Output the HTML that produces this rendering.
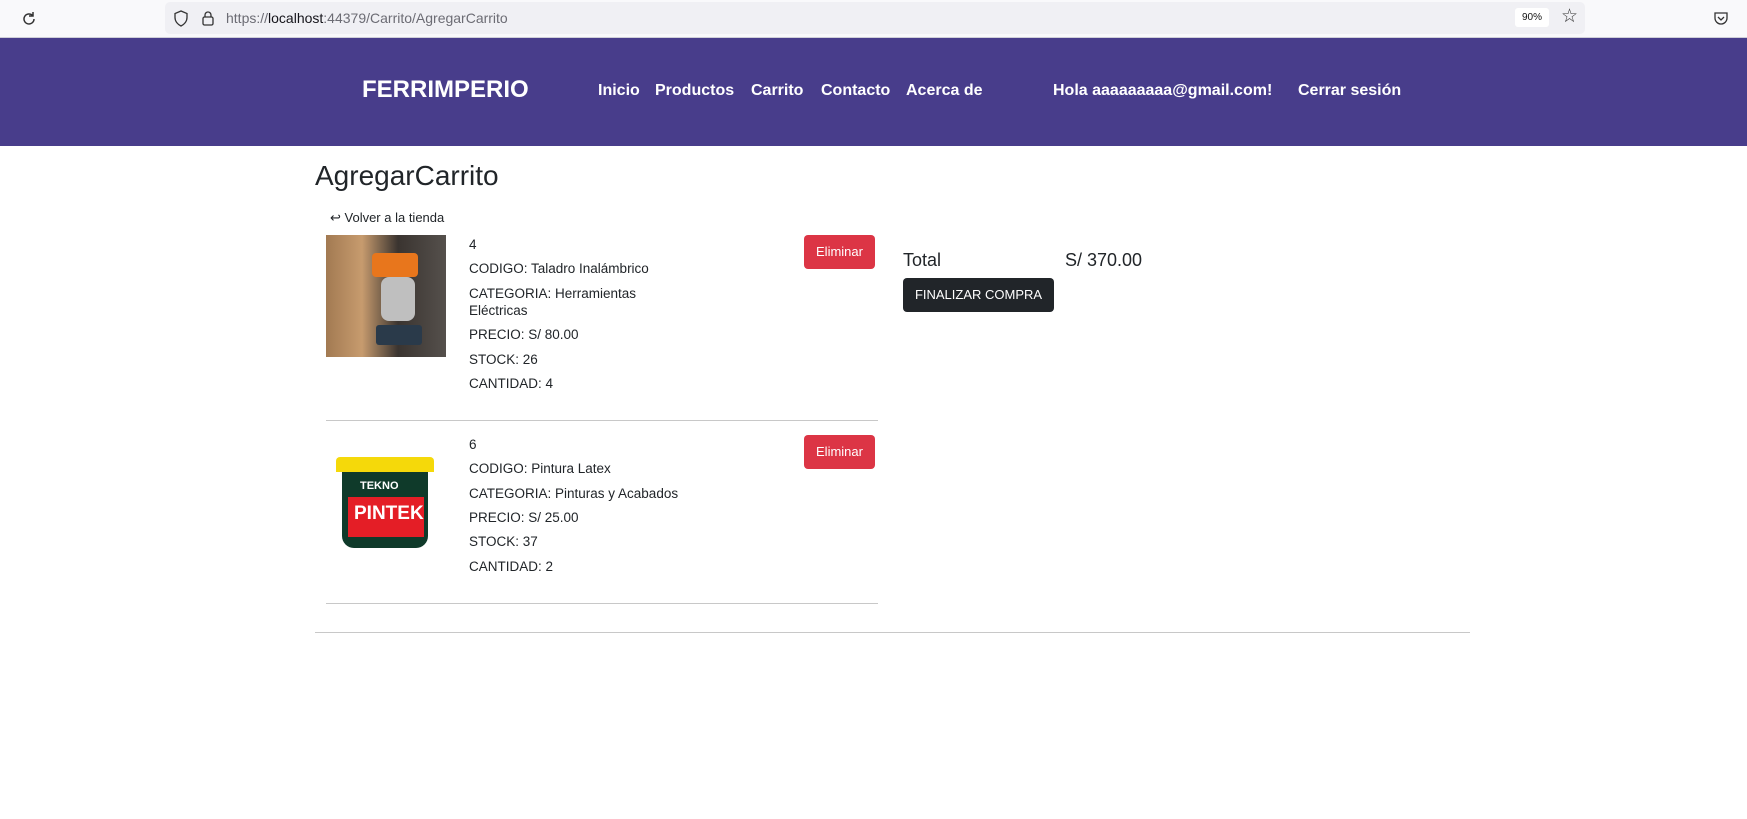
<!DOCTYPE html>
<html><head><meta charset="utf-8"><style>
*{margin:0;padding:0;box-sizing:border-box}
body{width:1747px;height:819px;background:#fff;font-family:"Liberation Sans",sans-serif;color:#212529;position:relative;overflow:hidden}
.a{position:absolute;white-space:nowrap}
.bar{position:absolute;left:0;top:0;width:1747px;height:38px;background:#f9f9fb;border-bottom:1px solid #cfcfd8}
.url{position:absolute;left:165px;top:2px;width:1420px;height:32px;background:#f0f0f4;border-radius:5px}
nav{position:absolute;left:0;top:38px;width:1747px;height:108px;background:#483d8b}
nav .a{color:#fff;font-weight:bold;font-size:16px;top:44px}
.t{font-size:13.5px;color:#212529}
.btn{position:absolute;background:#dc3545;color:#fff;font-size:13px;border-radius:4px;text-align:center;line-height:34px;width:71px;height:34px}
hr{position:absolute;border:0;border-top:1px solid #c8c8c8;height:0}
</style></head><body>
<div class="bar">
 <svg class="a" style="left:20px;top:10px" width="18" height="18" viewBox="0 0 18 18"><path d="M14 9a5 5 0 1 1-1.5-3.6M13 2v4h-4" fill="none" stroke="#333" stroke-width="1.5"/></svg>
 <div class="url">
  <svg class="a" style="left:8px;top:8px" width="16" height="17" viewBox="0 0 16 17"><path d="M8 1L2 3.5v4c0 4 3 7 6 8.5 3-1.5 6-4.5 6-8.5v-4z" fill="none" stroke="#333" stroke-width="1.3"/></svg>
  <svg class="a" style="left:36px;top:8px" width="14" height="17" viewBox="0 0 14 17"><rect x="2" y="7" width="10" height="8" rx="1.5" fill="none" stroke="#333" stroke-width="1.3"/><path d="M4 7V5a3 3 0 0 1 6 0v2" fill="none" stroke="#333" stroke-width="1.3"/></svg>
  <div class="a" style="left:61px;top:8px;font-size:14px;color:#6c6c74">https://<span style="color:#15141a">localhost</span>:44379/Carrito/AgregarCarrito</div>
  <div class="a" style="left:1350px;top:6px;width:34px;height:19px;background:#fff;border-radius:3px;font-size:10px;line-height:19px;text-align:center;color:#111">90%</div>
  <div class="a" style="left:1396px;top:3px;font-size:19px;color:#333">☆</div>
 </div>
 <svg class="a" style="left:1713px;top:10px" width="16" height="16" viewBox="0 0 16 16"><path d="M2 3h12v5a6 6 0 0 1-12 0z" fill="none" stroke="#333" stroke-width="1.3"/><path d="M5 7l3 3 3-3" fill="none" stroke="#333" stroke-width="1.3"/></svg>
</div>
<nav>
 <div class="a" style="left:362px;top:38px;font-size:24px">FERRIMPERIO</div>
 <div class="a" style="left:598px">Inicio</div>
 <div class="a" style="left:655px">Productos</div>
 <div class="a" style="left:751px">Carrito</div>
 <div class="a" style="left:821px">Contacto</div>
 <div class="a" style="left:906px">Acerca de</div>
 <div class="a" style="left:1053px">Hola aaaaaaaaa@gmail.com!</div>
 <div class="a" style="left:1298px">Cerrar sesión</div>
</nav>
<div class="a" style="left:315px;top:160px;font-size:28px">AgregarCarrito</div>
<div class="a" style="left:330px;top:210px;font-size:13px">↩ Volver a la tienda</div>

<div class="a" style="left:326px;top:235px;width:120px;height:122px;background:linear-gradient(90deg,#a27a52 0%,#c79b6e 30%,#3a3430 60%,#55504c 100%)">
 <div class="a" style="left:46px;top:18px;width:46px;height:24px;background:#e8761c;border-radius:4px"></div>
 <div class="a" style="left:55px;top:42px;width:34px;height:44px;background:#bfbfbf;border-radius:8px"></div>
 <div class="a" style="left:50px;top:90px;width:46px;height:20px;background:#2a3a4a;border-radius:3px"></div>
</div>
<div class="a t" style="left:469px;top:237px">4</div>
<div class="a t" style="left:469px;top:261px">CODIGO: Taladro Inalámbrico</div>
<div class="a t" style="left:469px;top:286px">CATEGORIA: Herramientas</div>
<div class="a t" style="left:469px;top:303px">Eléctricas</div>
<div class="a t" style="left:469px;top:327px">PRECIO: S/ 80.00</div>
<div class="a t" style="left:469px;top:352px">STOCK: 26</div>
<div class="a t" style="left:469px;top:376px">CANTIDAD: 4</div>
<div class="btn" style="left:804px;top:235px">Eliminar</div>
<hr style="left:326px;top:420px;width:552px">

<div class="a" style="left:336px;top:457px;width:98px;height:91px">
 <div class="a" style="left:0;top:0;width:98px;height:15px;background:#f5d90a;border-radius:4px 4px 0 0"></div>
 <div class="a" style="left:6px;top:15px;width:86px;height:76px;background:#0f3a2a;border-radius:0 0 12px 12px"></div>
 <div class="a" style="left:12px;top:40px;width:76px;height:40px;background:#e41e26"></div>
 <div class="a" style="left:24px;top:23px;font-size:11px;font-weight:bold;color:#fff">TEKNO</div>
 <div class="a" style="left:18px;top:46px;font-size:19px;font-weight:bold;color:#fff">PINTEK</div>
</div>
<div class="a t" style="left:469px;top:437px">6</div>
<div class="a t" style="left:469px;top:461px">CODIGO: Pintura Latex</div>
<div class="a t" style="left:469px;top:486px">CATEGORIA: Pinturas y Acabados</div>
<div class="a t" style="left:469px;top:510px">PRECIO: S/ 25.00</div>
<div class="a t" style="left:469px;top:534px">STOCK: 37</div>
<div class="a t" style="left:469px;top:559px">CANTIDAD: 2</div>
<div class="btn" style="left:804px;top:435px">Eliminar</div>
<hr style="left:326px;top:603px;width:552px">

<div class="a" style="left:903px;top:250px;font-size:18px">Total</div>
<div class="a" style="left:1065px;top:250px;font-size:18px">S/ 370.00</div>
<div class="a" style="left:903px;top:278px;width:151px;height:34px;background:#212529;border-radius:4px;color:#fff;font-size:13px;line-height:34px;text-align:center">FINALIZAR COMPRA</div>
<hr style="left:315px;top:632px;width:1155px">
</body></html>
